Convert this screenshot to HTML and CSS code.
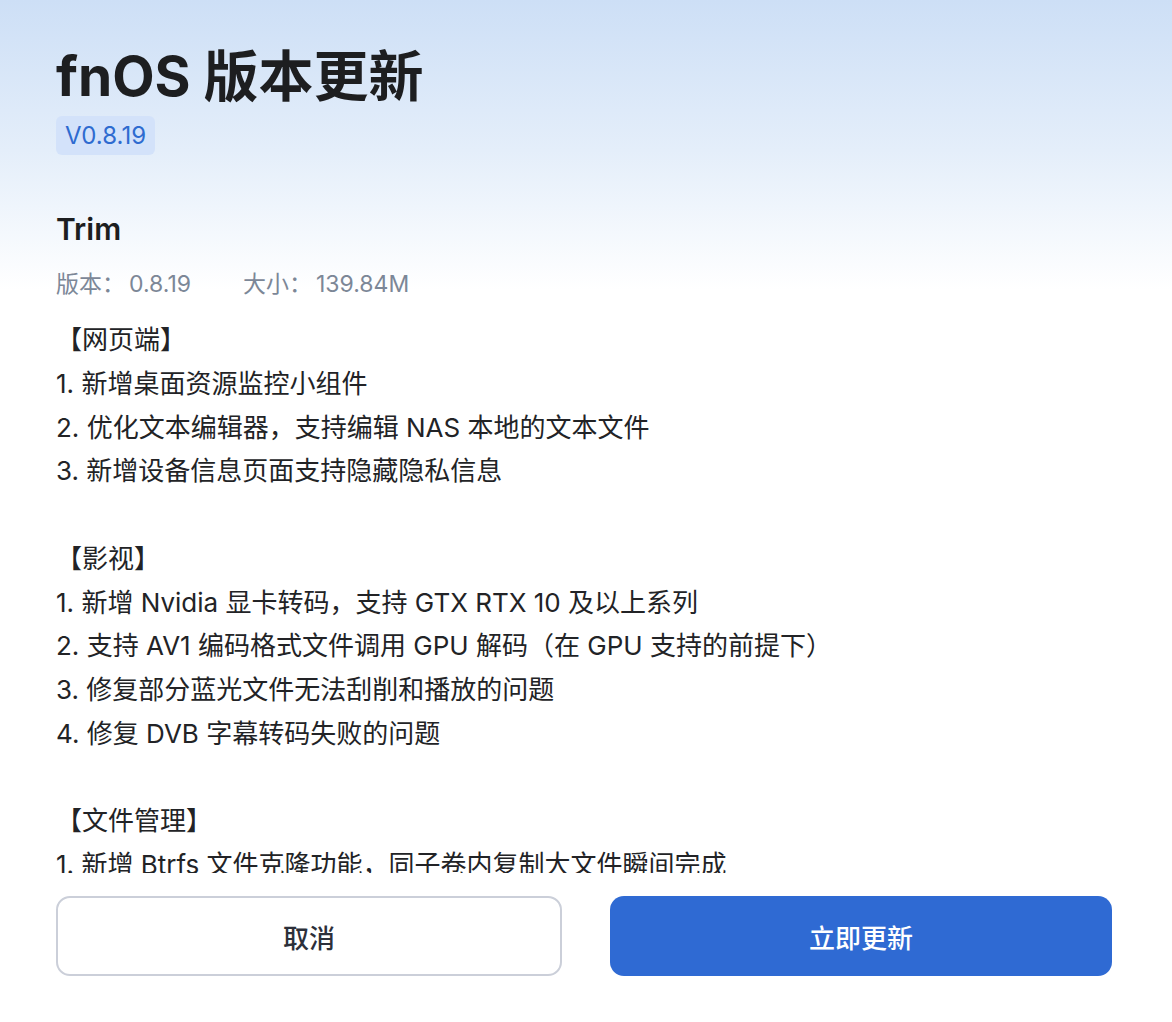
FILE: index.html
```html
<!DOCTYPE html>
<html lang="zh-CN">
<head>
    <meta charset="UTF-8">
    <meta name="viewport" content="width=device-width, initial-scale=1.0">
    <title>fnOS 版本更新</title>
    <link rel="stylesheet" href="styles.css">
</head>
<body>
    <div class="dialog">
        <header class="head">
            <h1 class="title">fnOS 版本更新</h1>
            <span class="badge">V0.8.19</span>
        </header>
        <h2 class="app-name">Trim</h2>
        <div class="meta">
            <span>版本：<b>0.8.19</b></span>
            <span>大小：<b>139.84M</b></span>
        </div>
        <div class="notes">
            <div class="section">
                <p>【网页端】</p>
                <p>1. 新增桌面资源监控小组件</p>
                <p>2. 优化文本编辑器，支持编辑 NAS 本地的文本文件</p>
                <p>3. 新增设备信息页面支持隐藏隐私信息</p>
            </div>
            <div class="section">
                <p>【影视】</p>
                <p>1. 新增 Nvidia 显卡转码，支持 GTX RTX 10 及以上系列</p>
                <p>2. 支持 AV1 编码格式文件调用 GPU 解码（在 GPU 支持的前提下）</p>
                <p>3. 修复部分蓝光文件无法刮削和播放的问题</p>
                <p>4. 修复 DVB 字幕转码失败的问题</p>
            </div>
            <div class="section">
                <p>【文件管理】</p>
                <p>1. 新增 Btrfs 文件克隆功能，同子卷内复制大文件瞬间完成</p>
            </div>
        </div>
        <footer class="actions">
            <button class="btn btn-cancel">取消</button>
            <button class="btn btn-primary">立即更新</button>
        </footer>
    </div>
</body>
</html>
```

FILE: styles.css
```css
html, body {
    height: 100%;
}
body {
    margin: 0;
    font-family: 'Inter', 'Noto Sans CJK SC', sans-serif;
    background: linear-gradient(180deg, #cddff6 0, #e4eefa 150px, #ffffff 290px) no-repeat, #fff;
    color: #222326;
}
.dialog {
    height: 1022px;
    box-sizing: border-box;
    display: flex;
    flex-direction: column;
    padding: 0 60px 0 56px;
}
.head {
    padding-top: 43px;
}
.title {
    margin: 0;
    font-size: 55px;
    line-height: 66px;
    font-weight: 700;
    color: #1d1e20;
}
.badge {
    display: inline-block;
    margin-top: 7px;
    padding: 0 9px;
    height: 39px;
    line-height: 39px;
    font-size: 24px;
    color: #2e6bd0;
    background: #d3e2fa;
    border-radius: 6px;
}
.app-name {
    margin: 54px 0 0;
    font-size: 30px;
    line-height: 40px;
    font-weight: 600;
    color: #1d1e20;
}
.meta {
    margin-top: 19px;
    display: flex;
    gap: 52px;
    font-size: 23px;
    line-height: 32px;
    color: #7c8797;
}
.meta b {
    font-weight: 400;
    margin-left: 4px;
}
.notes {
    margin-top: 18px;
    flex: 1;
    min-height: 0;
    overflow: hidden;
    font-size: 26px;
    line-height: 43.75px;
}
.notes p {
    margin: 0;
}
.section {
    margin-bottom: 43.75px;
}
.actions {
    display: flex;
    gap: 48px;
    padding: 23px 0 46px;
}
.btn {
    flex: 1;
    height: 80px;
    border-radius: 14px;
    font-family: inherit;
    font-size: 26px;
    font-weight: 500;
    cursor: pointer;
}
.btn-cancel {
    background: #fff;
    border: 2px solid #cbcfd9;
    color: #2c303a;
}
.btn-primary {
    background: #2f6ad3;
    border: none;
    color: #fff;
}
```
